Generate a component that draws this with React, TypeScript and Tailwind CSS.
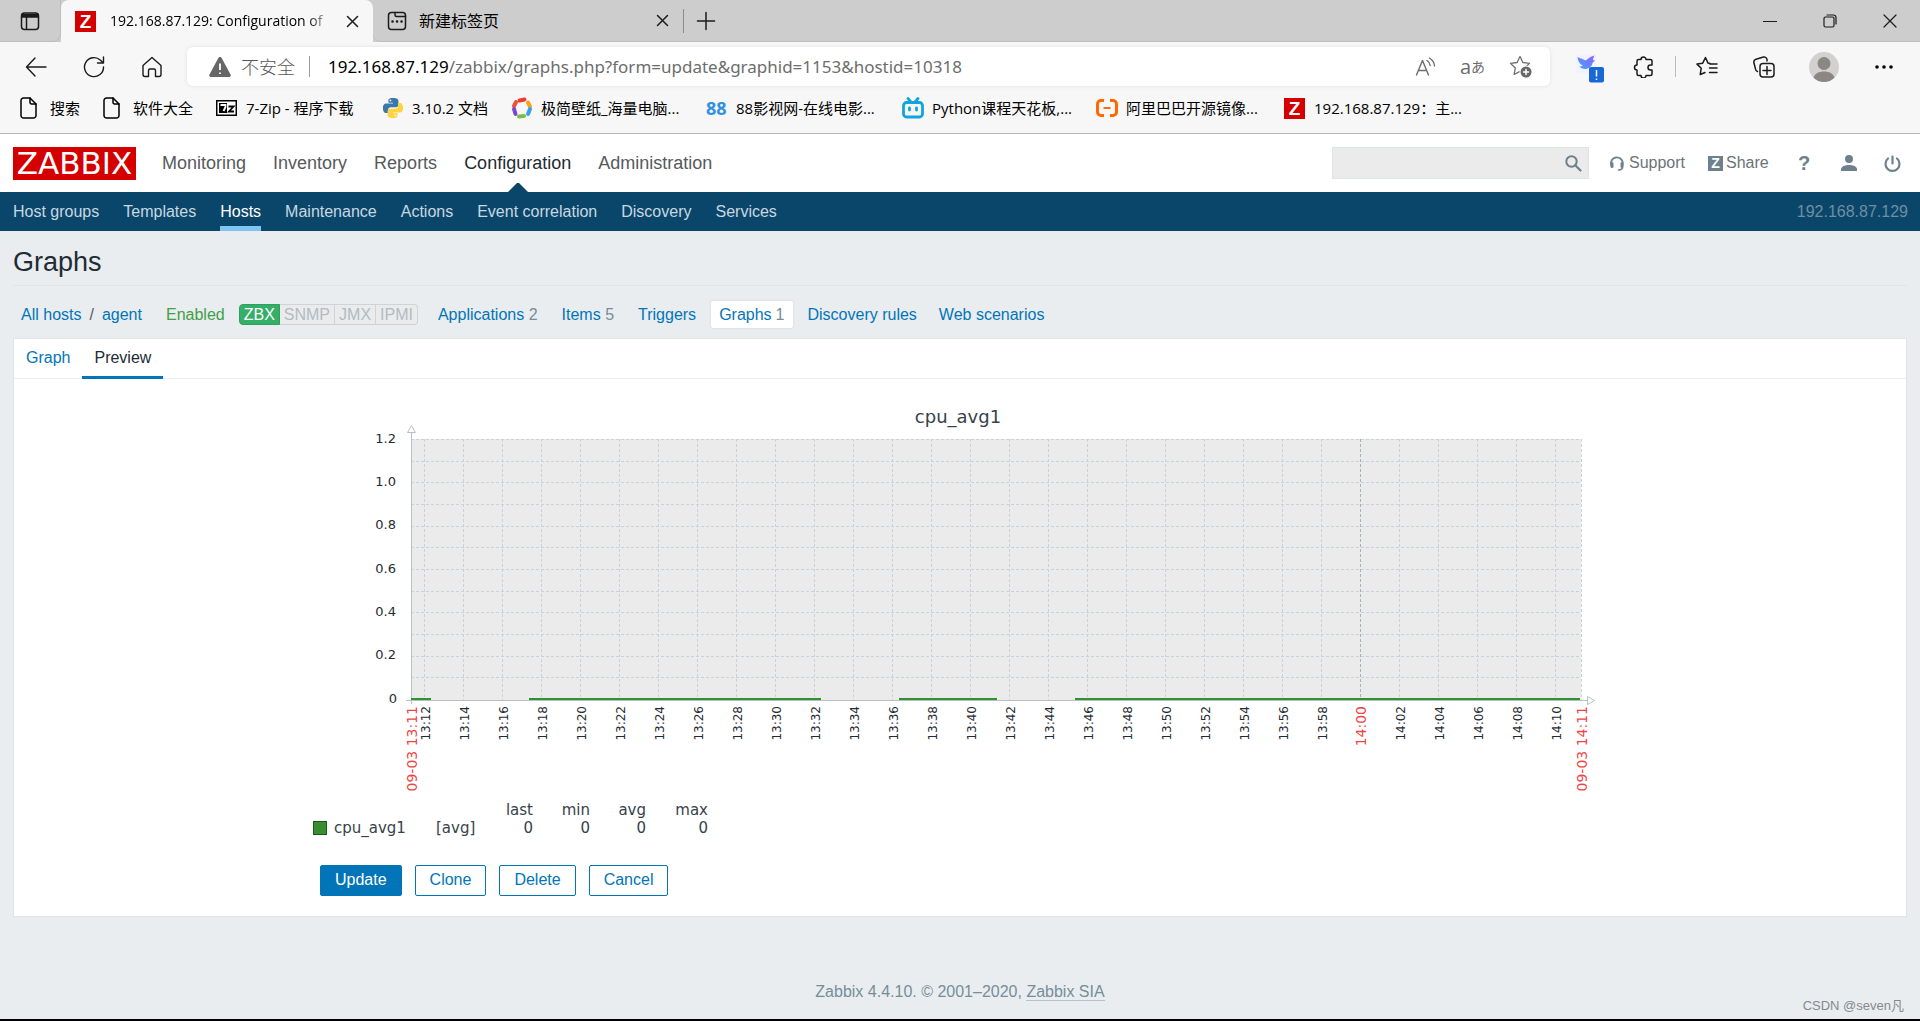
import React from "react";

const UI = "font-['Open_Sans','Noto_Sans_CJK_SC',sans-serif]";

type IconProps = { className?: string; children: React.ReactNode; box?: string };

function Icon({ className = "size-6", children, box = "0 0 24 24" }: IconProps) {
  return (
    <svg
      viewBox={box}
      className={`shrink-0 ${className}`}
      fill="none"
      stroke="currentColor"
      strokeWidth="1.5"
      strokeLinecap="round"
      strokeLinejoin="round"
      aria-hidden="true"
    >
      {children}
    </svg>
  );
}

function ZTile() {
  return (
    <span className="flex size-[21px] shrink-0 items-center justify-center bg-[#d40000] font-['Liberation_Sans',sans-serif] text-[19px] leading-none font-bold text-white">
      Z
    </span>
  );
}

function PageIcon() {
  return (
    <Icon className="h-[22px] w-[17px]" box="0 0 17 22">
      <path d="M3.500 1H10l6 6v11.500a2.500 2.500 0 0 1-2.500 2.500h-10A2.500 2.500 0 0 1 1 18.500v-15A2.500 2.500 0 0 1 3.500 1z" />
      <path d="M10 1v4.500A1.500 1.500 0 0 0 11.500 7H16" />
    </Icon>
  );
}

function SevenZip() {
  return (
    <svg viewBox="0 0 21 16" className="h-4 w-[21px] shrink-0" aria-hidden="true">
      <rect width="21" height="16" />
      <rect x="1.500" y="1.500" width="18" height="13" fill="#fff" />
      <rect x="3" y="3" width="8" height="10" />
      <path d="M4.500 5h5v2L7.500 11" fill="none" stroke="#fff" strokeWidth="1.800" />
      <path d="M12.500 6.500h5l-4.500 5h5" fill="none" stroke="#000" strokeWidth="1.800" />
    </svg>
  );
}

function PythonLogo() {
  return (
    <svg viewBox="0 0 24 24" className="size-[22px] shrink-0" aria-hidden="true">
      <path
        fill="#3b77a8"
        d="M11.900 1C6.900 1 7 3.200 7 3.200v3h5v.8H5S1 6.500 1 12s3.300 5.500 3.300 5.500h2.300v-3s-.1-3.300 3.200-3.300h5.100s3 .1 3-3V4S18.400 1 11.900 1zM9.200 2.700a1 1 0 1 1 0 2 1 1 0 0 1 0-2z"
      />
      <path
        fill="#fdd43f"
        d="M12.100 23c5 0 4.900-2.200 4.900-2.200v-3h-5V17h7s4 .5 4-5-3.300-5.500-3.300-5.500h-2.300v3s.1 3.300-3.200 3.300H9.100s-3-.1-3 3V20S5.600 23 12.100 23zm2.700-1.700a1 1 0 1 1 0-2 1 1 0 0 1 0 2z"
      />
    </svg>
  );
}

function RingLogo() {
  return (
    <svg viewBox="0 0 22 22" className="size-[22px] shrink-0" fill="none" strokeWidth="4" strokeLinecap="round" aria-hidden="true">
      <path d="M8.500 3.500l5-1" stroke="#ef3b34" />
      <path d="M3 9l2-4" stroke="#f0503a" />
      <path d="M17 5.500l2 4" stroke="#f9a21b" />
      <path d="M19 12l-2 5" stroke="#3aa0ee" />
      <path d="M8 19.500l5-.5" stroke="#7cc043" />
      <path d="M3 12l1.500 5" stroke="#7a49c9" />
    </svg>
  );
}

function BiliLogo() {
  return (
    <svg viewBox="0 0 22 22" className="size-[22px] shrink-0" fill="none" stroke="#12a5dc" strokeWidth="2.800" strokeLinecap="round" aria-hidden="true">
      <rect x="1.500" y="5.500" width="19" height="14.500" rx="3" />
      <path d="M6 1.500l2.500 3M16 1.500l-2.500 3M7.500 11v2M14.500 11v2" />
    </svg>
  );
}

function AliLogo() {
  return (
    <svg viewBox="0 0 22 18" className="h-[18px] w-[22px] shrink-0" fill="none" stroke="#ff6a00" strokeWidth="3" aria-hidden="true">
      <path d="M8 1.500H5A3.500 3.500 0 0 0 1.500 5v8A3.500 3.500 0 0 0 5 16.500h3M14 1.500h3A3.500 3.500 0 0 1 20.500 5v8a3.500 3.500 0 0 1-3.500 3.500h-3" />
      <path d="M7.500 9h7" strokeWidth="2" />
    </svg>
  );
}

const bookmarks = [
  { label: "搜索", icon: <PageIcon />, width: "w-[83px]" },
  { label: "软件大全", icon: <PageIcon />, width: "w-[113px]" },
  { label: "7-Zip - 程序下载", icon: <SevenZip />, width: "w-[166px]" },
  { label: "3.10.2 文档", icon: <PythonLogo />, width: "w-[129px]" },
  { label: "极简壁纸_海量电脑...", icon: <RingLogo />, width: "w-[195px]" },
  {
    label: "88影视网-在线电影...",
    icon: <span className="w-[22px] text-lg leading-none font-bold text-[#3091e0]">88</span>,
    width: "w-[196px]",
  },
  { label: "Python课程天花板,...", icon: <BiliLogo />, width: "w-[194px]" },
  { label: "阿里巴巴开源镜像...", icon: <AliLogo />, width: "w-[188px]" },
  { label: "192.168.87.129：主...", icon: <ZTile />, width: "w-[186px]" },
];

function TabStrip() {
  return (
    <div className="flex h-[42px] bg-[#cdcdcd] text-[#1b1b1b]">
      <button aria-label="Tab actions" className="flex w-[61px] items-center justify-center rounded-br-lg border-r border-b border-[#bdbdbd]">
        <Icon className="size-5" box="0 0 20 20">
          <rect x="1.500" y="2" width="17" height="16.500" rx="3" />
          <path d="M2 3.500h16V6H2z" fill="currentColor" />
          <path d="M6.500 6v12" />
        </Icon>
      </button>
      <div className="flex w-[312px] items-center rounded-t-lg bg-[#f7f7f7] pl-3.5">
        <ZTile />
        <span className="ml-3.5 w-[224px] overflow-hidden text-sm whitespace-nowrap text-black [mask-image:linear-gradient(90deg,#000_88%,transparent)]">
          192.168.87.129: Configuration of
        </span>
        <button aria-label="Close tab" className="ml-3">
          <Icon className="size-[13px]" box="0 0 13 13">
            <path d="M1.500 1.500l10 10M11.500 1.500l-10 10" />
          </Icon>
        </button>
      </div>
      <div className="flex w-[310px] items-center rounded-bl-lg border-b border-[#bdbdbd] pl-3.5">
        <Icon className="size-5" box="0 0 20 20">
          <rect x="1.500" y="1.500" width="17" height="17" rx="3" />
          <path d="M8 1.500V4a1.500 1.500 0 0 0 1.500 1.500h9" />
          <path d="M5.500 10.500h.1M10 10.500h.1M14.500 10.500h.1" strokeWidth="2.500" />
        </Icon>
        <span className="ml-3 flex-1 text-base text-black">新建标签页</span>
        <button aria-label="Close tab" className="mr-3.5">
          <Icon className="size-[13px]" box="0 0 13 13">
            <path d="M1.500 1.500l10 10M11.500 1.500l-10 10" />
          </Icon>
        </button>
      </div>
      <div className="flex flex-1 items-center border-b border-[#bdbdbd]">
        <span className="h-6 w-px bg-[#8c8c8c]" />
        <button aria-label="New tab" className="ml-3">
          <Icon className="size-5" box="0 0 20 20">
            <path d="M10 1.500v17M1.500 10h17" />
          </Icon>
        </button>
        <div className="ml-auto flex items-center gap-[46px] pr-[23px]">
          <button aria-label="Minimize">
            <Icon className="size-3.5" box="0 0 14 14">
              <path d="M.5 7.500h13" strokeWidth="1.200" />
            </Icon>
          </button>
          <button aria-label="Restore">
            <Icon className="size-3.5" box="0 0 14 14">
              <rect x="1" y="3" width="10" height="10" rx="1.500" strokeWidth="1.200" />
              <path d="M4 1h6.500A2.500 2.500 0 0 1 13 3.500V10" strokeWidth="1.200" />
            </Icon>
          </button>
          <button aria-label="Close window">
            <Icon className="size-3.5" box="0 0 14 14">
              <path d="M1 1l12 12M13 1L1 13" strokeWidth="1.200" />
            </Icon>
          </button>
        </div>
      </div>
    </div>
  );
}

const starPath = "M11 1.500l2.900 6 6.600.9-4.800 4.600 1.200 6.500L11 16.400l-5.900 3.100 1.200-6.500L1.500 8.400l6.600-.9z";

function AddressRow() {
  return (
    <div className="flex h-[49px] items-center text-[#1b1b1b]">
      <div className="flex w-[187px] shrink-0 items-center gap-9 pl-[25px]">
        <button aria-label="Back">
          <Icon className="size-[22px]" box="0 0 22 22">
            <path d="M21 11H1.500M10 2L1.500 11l8.500 9" strokeWidth="1.400" />
          </Icon>
        </button>
        <button aria-label="Refresh">
          <Icon className="size-[22px]" box="0 0 22 22">
            <path d="M20.500 11A9.500 9.500 0 1 1 17.500 4.200L20 6.500M20.500 1v6h-6" strokeWidth="1.400" />
          </Icon>
        </button>
        <button aria-label="Home">
          <Icon className="size-[22px]" box="0 0 22 22">
            <path d="M2 9.500L11 1.500l9 8v9a2 2 0 0 1-2 2h-3.500v-6a1.500 1.500 0 0 0-1.500-1.500H9A1.500 1.500 0 0 0 7.500 14.500v6H4a2 2 0 0 1-2-2z" strokeWidth="1.400" />
          </Icon>
        </button>
      </div>
      <div className="flex h-[39px] flex-1 items-center rounded-md bg-white pr-[18px] pl-[22px] text-[#6d6d6d] shadow-[0_0_4px_#e2e2e2]">
        <svg viewBox="0 0 22 20" className="h-5 w-[22px]" aria-hidden="true">
          <path d="M11 0c.9 0 1.400.5 1.800 1.200l8.700 16.300c.7 1.300 0 2.500-1.500 2.500H2c-1.500 0-2.200-1.200-1.500-2.500L9.200 1.200C9.600.5 10.100 0 11 0z" fill="#666" />
          <path d="M11 6.500v6.500M11 15.500v1.500" stroke="#fff" strokeWidth="1.800" />
        </svg>
        <span className="ml-2.5 text-lg font-light text-[#555]">不安全</span>
        <span className="ml-3.5 h-[21px] w-px bg-[#9a9a9a]" />
        <div
          role="textbox"
          aria-label="Address"
          contentEditable
          suppressContentEditableWarning
          className="ml-[18px] flex-1 font-['Noto_Sans',sans-serif] text-[17px] whitespace-nowrap outline-none"
        >
          <span className="text-black">192.168.87.129</span>/zabbix/graphs.php?form=update&amp;graphid=1153&amp;hostid=10318
        </div>
        <div className="flex items-center gap-6">
          <button aria-label="Read aloud">
            <Icon className="h-5 w-[21px]" box="0 0 21 20">
              <path d="M1.500 18L7.500 3.500l6 14.500M3.500 13.500h8M12 3.500c2 1.300 3 2.800 3.200 5M14.500 1c3 1.800 4.700 4.500 5 8" strokeWidth="1.400" />
            </Icon>
          </button>
          <button aria-label="Translate" className="flex items-center text-xl leading-none">
            a<span className="text-sm leading-none">あ</span>
          </button>
          <button aria-label="Add to favorites">
            <Icon className="size-[23px]" box="0 0 23 23">
              <path d={starPath} strokeWidth="1.300" />
              <circle cx="17" cy="17" r="6.500" fill="#fff" stroke="none" />
              <circle cx="17" cy="17" r="5.500" fill="#666" stroke="none" />
              <path d="M17 14.500v5M14.500 17h5" stroke="#fff" />
            </Icon>
          </button>
        </div>
      </div>
      <div className="flex w-[370px] shrink-0 items-center pl-[26px]">
        <button aria-label="Bird extension" className="mt-1">
          <svg viewBox="0 0 28 29" className="h-[29px] w-7" aria-hidden="true">
            <defs>
              <linearGradient id="bird" x1="0" x2="1" y1="1" y2="0">
                <stop offset="0" stopColor="#3fa4ff" />
                <stop offset="1" stopColor="#8f63ff" />
              </linearGradient>
            </defs>
            <rect width="20" height="20" rx="3" fill="#f1f3fe" />
            <path d="M1.500 3c3 1.500 5.500 2 8 3.500C12 5 14 2.500 18.500 1.500c-1 1.500-1.300 3-1.500 4.500l2 .8-2.300 1.700C16 13 12 15 9 15c-2.500 0-4.500-1-5.500-2.500 1.500 0 2.500-.3 3.300-1C4 10.500 2 7 1.500 3z" fill="url(#bird)" />
            <rect x="13" y="13" width="15" height="15.500" rx="2" fill="#1967d6" />
            <path d="M20.500 16v6.500M20.500 24.500v1.500" stroke="#fff" strokeWidth="1.500" />
          </svg>
        </button>
        <button aria-label="Extensions" className="ml-[29px]">
          <Icon className="size-[22px]" box="0 0 22 22">
            <path d="M8 3.500a2.500 2.500 0 0 1 5 0h4.500A1.500 1.500 0 0 1 19 5v4h-1.500a2.500 2.500 0 0 0 0 5H19v4a1.500 1.500 0 0 1-1.500 1.500H13a2.500 2.500 0 0 1-5 0H5.500A1.500 1.500 0 0 1 4 18v-4a2.500 2.500 0 0 1 0-5V5a1.500 1.500 0 0 1 1.500-1.500z" />
          </Icon>
        </button>
        <span className="ml-5 h-[21px] w-px bg-[#bcbcbc]" />
        <button aria-label="Favorites" className="ml-5">
          <Icon className="size-[22px]" box="0 0 22 22">
            <path d="M14 8H21M13.500 12H21M13.500 16.500H21" />
            <path d="M14 7.500l-2-.4L9.500 1.500 6.700 7.200l-5.700.9 4.200 4.200-1 6.200L9 16.500" />
          </Icon>
        </button>
        <button aria-label="Collections" className="ml-[35px]">
          <Icon className="size-[22px]" box="0 0 22 22">
            <rect x="7" y="7.500" width="14" height="13.500" rx="3" />
            <path d="M14 10.500v8M10 14.500h8M4.500 15.500a3 3 0 0 1-2-2.500L1 7a3 3 0 0 1 2-3.700L10.500 1A3 3 0 0 1 14 3.500V5" />
          </Icon>
        </button>
        <button aria-label="Profile" className="ml-[34px]">
          <svg viewBox="0 0 30 30" className="size-[30px]" aria-hidden="true">
            <circle cx="15" cy="15" r="15" fill="#d3d1cf" />
            <circle cx="15" cy="11.500" r="6.500" fill="#8b8784" />
            <path d="M4.500 25.700C5.500 21.500 10 19.500 15 19.500s9.500 2 10.500 6.200A15 15 0 0 1 4.500 25.700z" fill="#8b8784" />
          </svg>
        </button>
        <button aria-label="Settings and more" className="ml-9">
          <svg viewBox="0 0 18 4" className="h-1 w-[18px]" aria-hidden="true">
            <circle cx="2" cy="2" r="1.800" />
            <circle cx="9" cy="2" r="1.800" />
            <circle cx="16" cy="2" r="1.800" />
          </svg>
        </button>
      </div>
    </div>
  );
}

function BrowserChrome() {
  return (
    <div className={`${UI} border-b border-[#b9b9b9] bg-[#f7f7f7]`}>
      <TabStrip />
      <AddressRow />
      <div className="flex h-[42px] items-start overflow-hidden pt-[5px] pl-5">
        {bookmarks.map((b) => (
          <a key={b.label} href="#" className={`flex h-6 shrink-0 items-center text-[15px] whitespace-nowrap text-black ${b.width}`}>
            <span className="flex w-[30px] shrink-0">{b.icon}</span>
            {b.label}
          </a>
        ))}
      </div>
    </div>
  );
}

function Header() {
  return (
    <header className="flex h-[58px] items-center bg-white pr-[19px] pl-[13px]">
      <a
        href="#"
        className="flex h-[33px] w-[123px] items-center justify-center bg-[#d40000] font-['DejaVu_Sans',sans-serif] text-[31px] leading-none text-white"
      >
        ZABBIX
      </a>
      <nav className="ml-[26px] flex h-full items-center gap-[27px] text-lg text-[#565a5d]">
        <a href="#">Monitoring</a>
        <a href="#">Inventory</a>
        <a href="#">Reports</a>
        <a href="#" className="relative flex h-full items-center text-[#1f2c33]">
          Configuration
          <svg viewBox="0 0 20 10" className="absolute bottom-0 left-1/2 h-2.5 w-5 -translate-x-1/2" aria-hidden="true">
            <path d="M0 10L9 1h2l9 9z" fill="#0a466a" />
          </svg>
        </a>
        <a href="#">Administration</a>
      </nav>
      <form className="ml-auto flex h-8 w-[257px] items-center border border-[#dfe4e7] bg-[#ebebeb] pr-1.5">
        <input aria-label="Search" className="h-full min-w-0 flex-1 bg-transparent px-2 text-base outline-none" />
        <button type="button" aria-label="Search" className="text-[#6c818c]">
          <Icon className="size-[17px]" box="0 0 17 17">
            <circle cx="6.500" cy="6.500" r="5.200" strokeWidth="2" />
            <path d="M10.500 10.500l5 5" strokeWidth="2.200" />
          </Icon>
        </button>
      </form>
      <nav className="ml-5 flex items-center text-base text-[#6c7378]">
        <a href="#" className="flex w-[99px] items-center gap-1">
          <Icon className="size-4 text-[#6c818c]" box="0 0 16 16">
            <path d="M2.500 11A6 6 0 1 1 13.500 10.500" strokeWidth="1.800" />
            <path d="M3 8.500v3M13 8.500v3" strokeWidth="3" />
            <path d="M13.500 12c0 2-1.500 3-4 3" strokeWidth="1.600" />
          </Icon>
          Support
        </a>
        <a href="#" className="flex w-[90px] items-center gap-[3px]">
          <span className="flex size-[15px] items-center justify-center bg-[#6c818c] text-sm leading-none font-bold text-white">Z</span>
          Share
        </a>
        <a href="#" aria-label="Help" className="w-[43px] text-xl leading-none font-bold text-[#6c818c]">
          ?
        </a>
        <a href="#" aria-label="User profile" className="w-[43px]">
          <svg viewBox="0 0 16 16" className="size-4" fill="#6c818c" aria-hidden="true">
            <circle cx="8" cy="4" r="4" />
            <path d="M0 16v-2.500C1 11 4.500 10 8 10s7 1 8 3.500V16z" />
          </svg>
        </a>
        <a href="#" aria-label="Sign out" className="text-[#6c818c]">
          <Icon className="size-[17px]" box="0 0 17 17">
            <path d="M8.500 1.500v7M4 3.500a7 7 0 1 0 9 0" strokeWidth="2.200" />
          </Icon>
        </a>
      </nav>
    </header>
  );
}

const subItems = ["Host groups", "Templates", "Hosts", "Maintenance", "Actions", "Event correlation", "Discovery", "Services"];

function SubNav() {
  return (
    <nav className="flex h-[39px] gap-6 bg-[#0a466a] pr-3 pl-[13px] text-base text-[#c8d8e1]">
      {subItems.map((s) => (
        <a
          key={s}
          href="#"
          className={
            s === "Hosts"
              ? "flex items-center border-b-[5px] border-[#80c5f2] pt-[5px] text-white"
              : "flex items-center"
          }
        >
          {s}
        </a>
      ))}
      <span className="ml-auto self-center text-[#6e8fa3]">192.168.87.129</span>
    </nav>
  );
}

function Crumbs() {
  return (
    <div className="flex h-[52px] items-center pt-[5px] pl-2 text-base text-[#0275b8]">
      <a href="#">All hosts</a>
      <span className="mx-2 text-[#565a5d]">/</span>
      <a href="#">agent</a>
      <span className="ml-6 text-[#429e47]">Enabled</span>
      <span className="ml-3.5 flex h-[21px] text-base leading-[19px] text-[#b0bcc3]">
        <span className="rounded-l-sm border border-[#2f9f5e] bg-[#34af67] px-1 text-white">ZBX</span>
        <span className="border-y border-r border-[#ced5d9] bg-[#ebebeb] px-1">SNMP</span>
        <span className="border-y border-r border-[#ced5d9] bg-[#ebebeb] px-1">JMX</span>
        <span className="rounded-r-sm border-y border-r border-[#ced5d9] bg-[#ebebeb] px-1">IPMI</span>
      </span>
      <span className="ml-5 flex items-center gap-6">
        <a href="#">
          Applications <span className="text-[#768d99]">2</span>
        </a>
        <a href="#">
          Items <span className="text-[#768d99]">5</span>
        </a>
        <a href="#">Triggers</a>
      </span>
      <a href="#" className="mx-[15px] flex h-[27px] items-center gap-1 rounded-xs bg-white px-2 shadow-[0_0_2px_#c9d1d6]">
        Graphs <span className="text-[#768d99]">1</span>
      </a>
      <span className="flex items-center gap-[22px]">
        <a href="#">Discovery rules</a>
        <a href="#">Web scenarios</a>
      </span>
    </div>
  );
}

const timeLabels = Array.from({ length: 30 }, (_, i) => {
  const m = 12 + i * 2;
  const hour = m >= 60 ? 14 : 13;
  return { x: 424 + i * 39, text: `${hour}:${String(m % 60).padStart(2, "0")}` };
});
const rows = [439, 461, 482, 504, 526, 547, 569, 591, 612, 634, 656, 677];
const yLabels = ["1.2", "1.0", "0.8", "0.6", "0.4", "0.2"];
const segments = [
  [411, 431],
  [529, 821],
  [899, 997],
  [1075, 1580],
];

function Chart() {
  return (
    <svg
      viewBox="300 395 1310 400"
      className="block w-[1310px] max-w-full font-['DejaVu_Sans',sans-serif]"
      role="img"
      aria-label="cpu_avg1"
    >
      <text x="958" y="423" textAnchor="middle" className="fill-[#37424a] text-lg">
        cpu_avg1
      </text>
      <rect x="411" y="439" width="1170" height="261" fill="#ebebeb" />
      <g stroke="#c8d2d7" strokeDasharray="3 2" shapeRendering="crispEdges">
        {rows.map((y) => (
          <path key={y} d={`M411 ${y + 0.5}H1581`} />
        ))}
        {timeLabels.map((t) => (
          <path key={t.x} d={`M${t.x + 0.5} 439V700`} stroke={t.text === "14:00" ? "#a3b3bb" : undefined} />
        ))}
        <path d="M1581.500 439V700" />
      </g>
      <g fill="#fff" stroke="#b3c2c9">
        <path d="M411.500 432V704M406 700.500H1588" shapeRendering="crispEdges" />
        <path d="M407.500 432.500h8l-4-7zM1587.500 696.500v8l7-4z" />
      </g>
      {segments.map(([a, b]) => (
        <rect key={a} x={a} y="698" width={b - a} height="2" fill="#33902f" />
      ))}
      {yLabels.map((l, i) => (
        <text key={l} x="396" y={443 + Math.round(i * 43.2)} textAnchor="end" className="fill-[#1f2c33] text-[13px]">
          {l}
        </text>
      ))}
      <text x="397" y="703" textAnchor="end" className="fill-[#1f2c33] text-[13px]">
        0
      </text>
      {timeLabels.map((t) =>
        t.text === "14:00" ? (
          <text key={t.x} textAnchor="end" transform={`translate(${t.x + 6} 706) rotate(-90)`} className="fill-[#ee4444] text-sm">
            {t.text}
          </text>
        ) : (
          <text key={t.x} textAnchor="end" transform={`translate(${t.x + 6} 706) rotate(-90)`} className="fill-[#1f2c33] text-xs">
            {t.text}
          </text>
        ),
      )}
      <text textAnchor="end" transform="translate(417 706) rotate(-90)" className="fill-[#ee4444] text-sm">
        09-03 13:11
      </text>
      <text textAnchor="end" transform="translate(1587 706) rotate(-90)" className="fill-[#ee4444] text-sm">
        09-03 14:11
      </text>
    </svg>
  );
}

function Legend() {
  return (
    <table className="mt-1.5 ml-[13px] table-fixed text-right font-['DejaVu_Sans',sans-serif] text-[15px] leading-[18px] text-[#37424a]">
      <thead>
        <tr>
          <th className="w-[21px]" />
          <th className="w-[98px]" />
          <th className="w-14" />
          <th className="w-[45px] font-normal">last</th>
          <th className="w-[57px] font-normal">min</th>
          <th className="w-14 font-normal">avg</th>
          <th className="w-[62px] font-normal">max</th>
        </tr>
      </thead>
      <tbody>
        <tr>
          <td>
            <span className="block size-3.5 border border-[#1c5a1a] bg-[#388e2f]" />
          </td>
          <td className="text-left">cpu_avg1</td>
          <td className="pl-1 text-left">[avg]</td>
          <td>0</td>
          <td>0</td>
          <td>0</td>
          <td>0</td>
        </tr>
      </tbody>
    </table>
  );
}

function Panel() {
  const plain = "h-[31px] rounded-xs border border-[#0275b8] bg-white px-3.5 pb-0.5 leading-none text-[#0275b8]";
  return (
    <section className="border border-[#dfe4e7] bg-white pb-5 text-base">
      <div className="flex h-10 border-b border-[#ebeef0]" role="tablist">
        <button role="tab" className="px-3 pb-0.5 text-[#0275b8]">
          Graph
        </button>
        <button role="tab" aria-selected="true" className="h-10 border-b-[3px] border-[#0275b8] px-3 pt-px text-[#1f2c33]">
          Preview
        </button>
      </div>
      <div className="pt-4 pl-[286px]">
        <Chart />
        <Legend />
        <div className="mt-7 ml-5 flex gap-[13px]">
          <button className="h-[31px] rounded-xs border border-[#0275b8] bg-[#0275b8] px-3.5 pb-0.5 leading-none text-white">Update</button>
          <button className={plain}>Clone</button>
          <button className={plain}>Delete</button>
          <button className={plain}>Cancel</button>
        </div>
      </div>
    </section>
  );
}

export default function App() {
  return (
    <div className="flex min-h-screen flex-col border-b-2 border-black bg-[#e9edf0] font-['Liberation_Sans',sans-serif]">
      <BrowserChrome />
      <Header />
      <SubNav />
      <main className="px-[13px]">
        <h1 className="flex h-[55px] items-center border-b border-[#dfe4e7] pt-2 text-[27px] text-[#1f2c33]">Graphs</h1>
        <Crumbs />
        <Panel />
      </main>
      <footer className="mt-auto grid grid-cols-[1fr_auto_1fr] text-base text-[#768d99]">
        <p className="col-start-2 pb-[15px]">
          Zabbix 4.4.10. © 2001–2020,{" "}
          <a href="#" className="border-b border-[#b5c4cc]">
            Zabbix SIA
          </a>
        </p>
        <p className="self-end justify-self-end pr-4 pb-1 font-['Liberation_Sans','Noto_Sans_CJK_SC',sans-serif] text-[13px] text-[#85898c]">
          CSDN @seven凡
        </p>
      </footer>
    </div>
  );
}
